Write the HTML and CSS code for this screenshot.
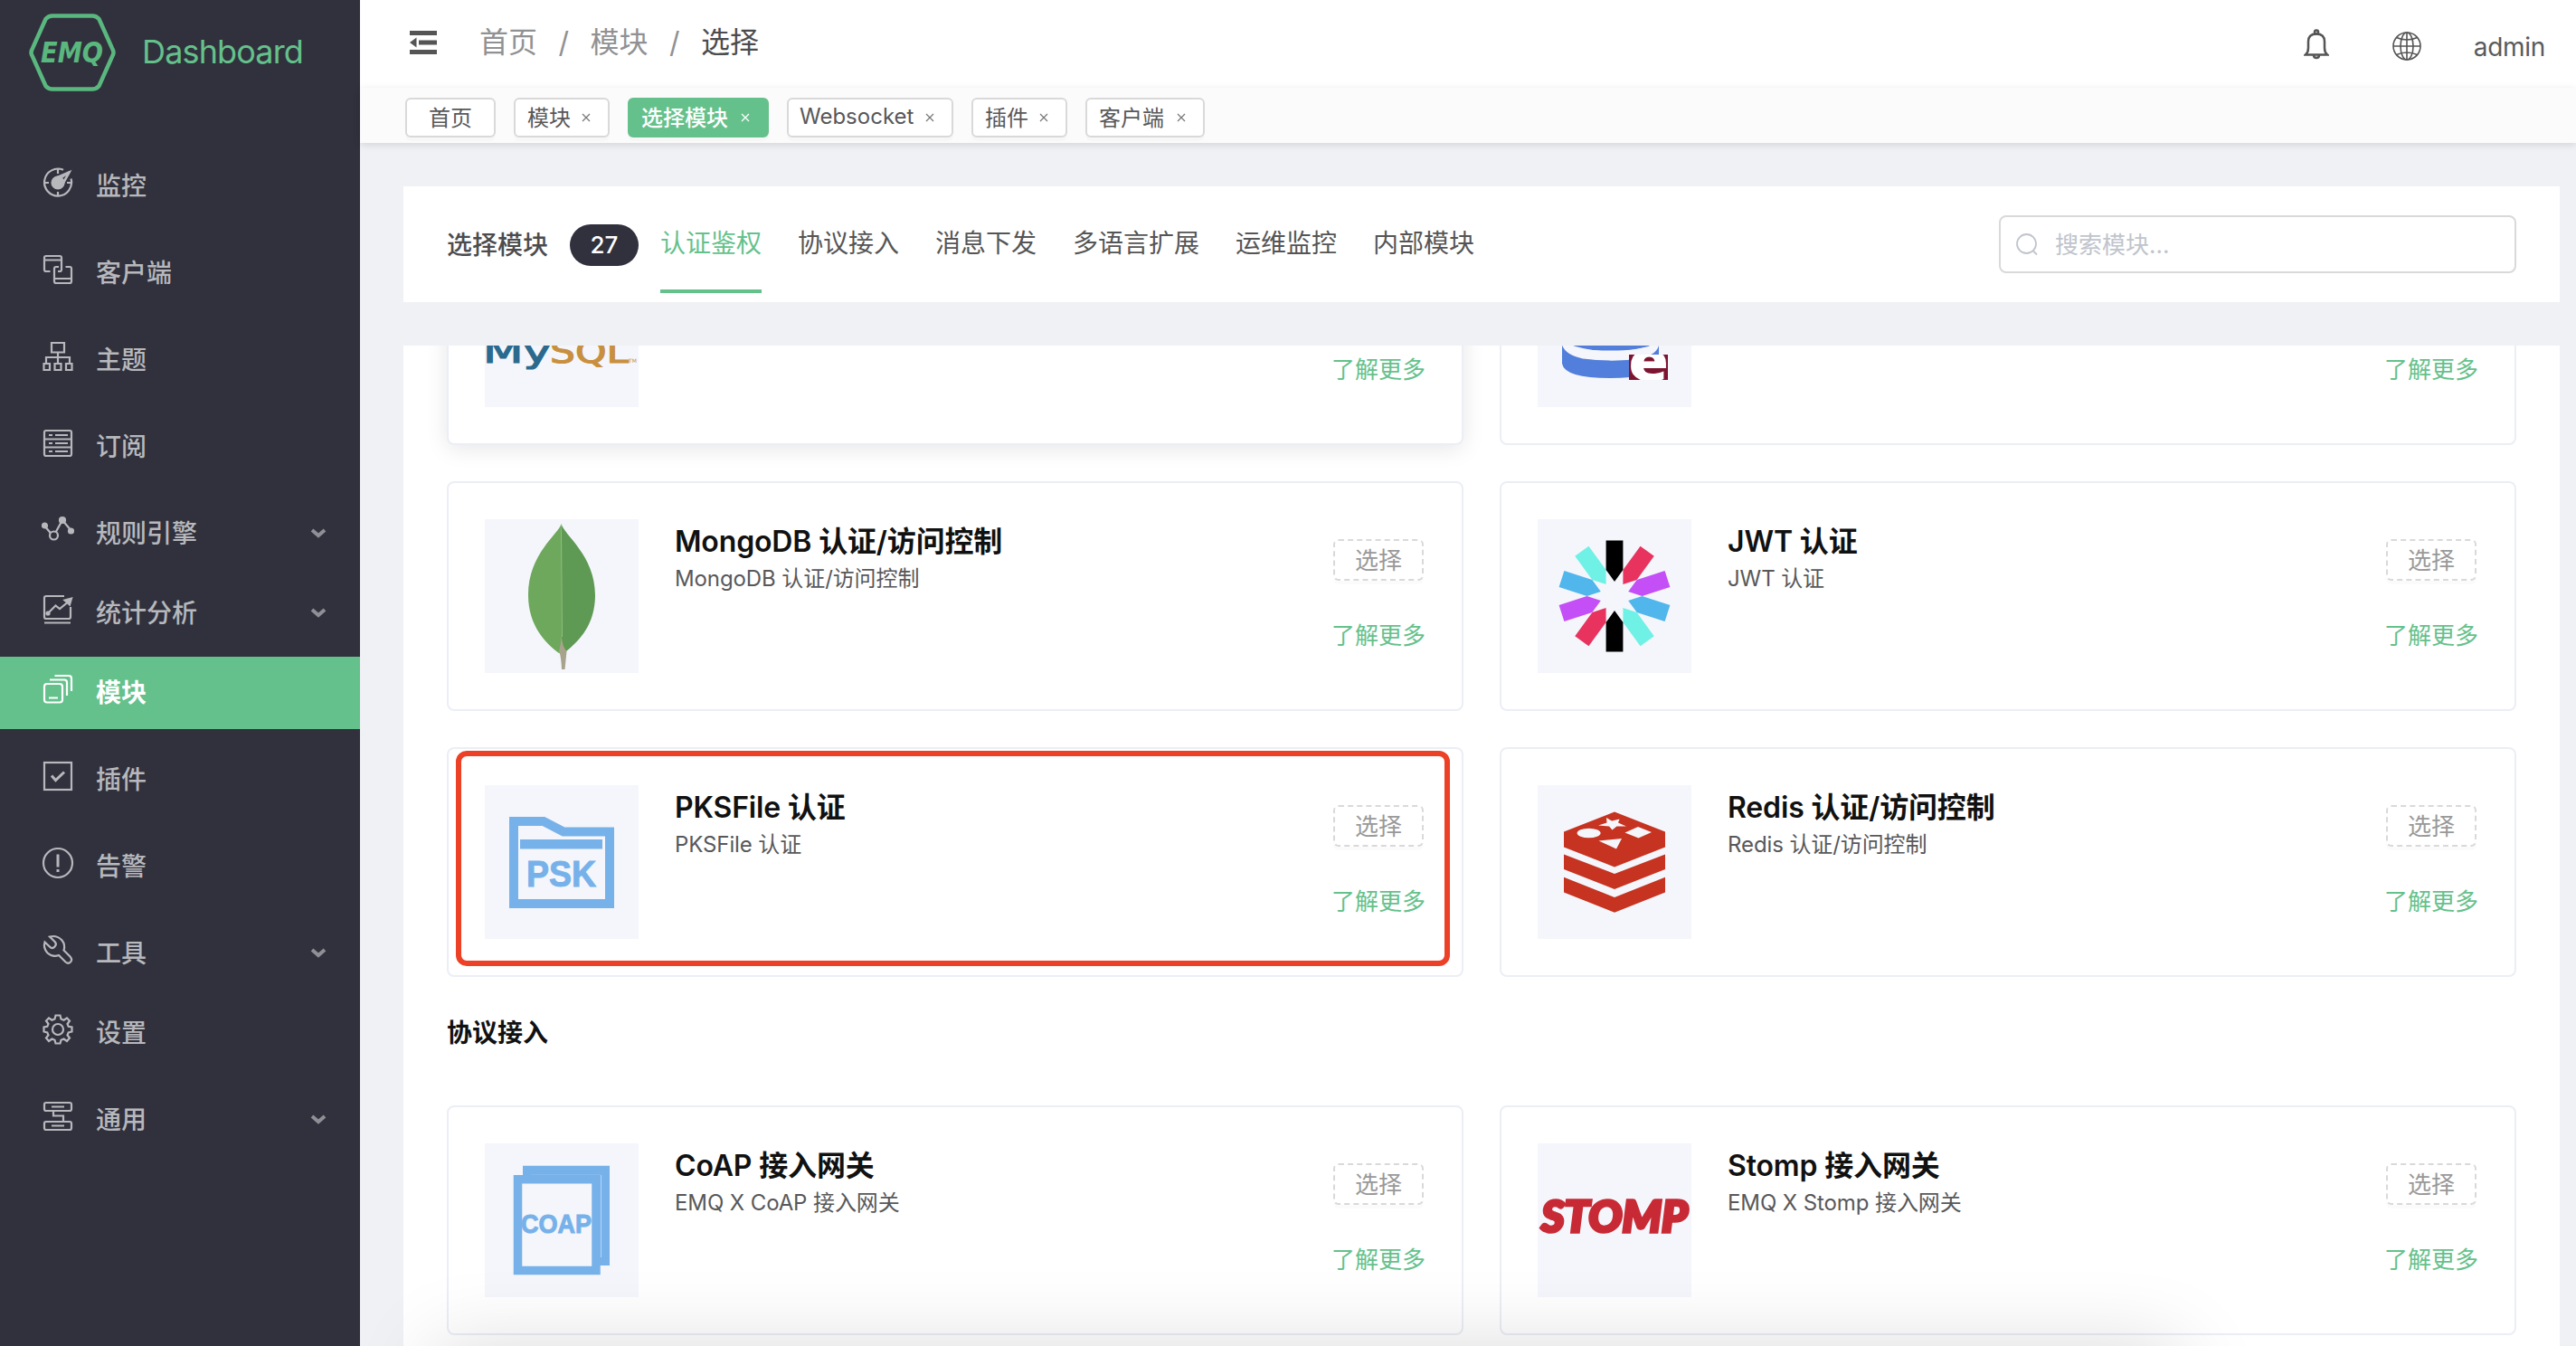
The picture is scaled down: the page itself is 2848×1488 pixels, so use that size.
FILE: index.html
```html
<!DOCTYPE html>
<html lang="zh-CN">
<head>
<meta charset="utf-8">
<title>EMQ Dashboard</title>
<link rel="stylesheet" href="styles.css">
</head>
<body>
<div class="app">
  <aside class="sidebar">
    <div class="brand">
      <svg class="brand-logo" width="96" height="86" viewBox="0 0 96 86">
        <path d="M26 2.500H70Q74.500 2.500 77.500 6L92 38.500Q95 43 92 47.500L77.500 80Q74.500 83.500 70 83.500H26Q21.500 83.500 18.500 80L4 47.500Q1 43 4 38.500L18.500 6Q21.500 2.500 26 2.500Z" class="logo-line"/>
        <text x="13" y="54" textLength="69" lengthAdjust="spacingAndGlyphs" class="logo-text">EMQ</text>
      </svg>
      <span class="brand-name">Dashboard</span>
    </div>
    <nav class="menu">
      <a class="menu-item"><svg class="menu-icon" viewBox="0 0 36 36"><path d="M24 3.800A15 15 0 1 0 32.500 13.500M18 3v5M18 28v5M3 18h5M28 18h5"/><path d="M31 6 21.500 12.500M31 6 24 17"/><circle cx="18" cy="18" r="6.500" class="fill"/><path d="M18 11.500 31 6 24.500 18Z"/></svg><span>监控</span></a>
      <a class="menu-item"><svg class="menu-icon" viewBox="0 0 36 36"><path d="M9.500 20H5Q3 20 3 18V5Q3 3 5 3H20Q22 3 22 5V18Q22 20 20 20H18M3 7.500H22"/><path d="M26.500 15H31Q33 15 33 17V31Q33 33 31 33H16Q14 33 14 31V17Q14 15 16 15H19M14 28H33"/></svg><span>客户端</span></a>
      <a class="menu-item"><svg class="menu-icon" viewBox="0 0 36 36"><path d="M11 3H25V13.500H11ZM18 13.500V26M5 26V19H31V26M2.500 26H9V33H2.500ZM14.500 26H21.500V33H14.500ZM27 26H33.500V33H27Z"/></svg><span>主题</span></a>
      <a class="menu-item"><svg class="menu-icon" viewBox="0 0 36 36"><rect x="3" y="4" width="30" height="28" rx="2"/><path d="M3 13.500H33M3 22.500H33M8 9H12M15 9H29M8 18H12M15 18H29M8 27H12M15 27H29"/></svg><span>订阅</span></a>
      <a class="menu-item sub"><svg class="menu-icon" viewBox="0 0 36 36"><path d="M3 13 13 25 23 7 33 19"/><circle cx="3.500" cy="13" r="2.500" class="fill"/><circle cx="23" cy="7" r="3" class="fill"/><circle cx="32.500" cy="19" r="2.500" class="fill"/><circle cx="13.500" cy="24" r="4.500" class="bg"/></svg><span>规则引擎</span><svg class="chevron" viewBox="0 0 18 12"><path d="M2 3 9 9 16 3"/></svg></a>
      <a class="menu-item sub"><svg class="menu-icon" viewBox="0 0 36 36"><path d="M25 3H5Q3 3 3 5V26Q3 28 5 28H30Q32 28 32 26V15M3 32.500H32M7 22 15.500 13.500 20 17 31 8"/><circle cx="7" cy="22" r="1.500" class="fill"/><path d="M25.500 7.500 33 5.500 31 12.500Z" class="fill"/></svg><span>统计分析</span><svg class="chevron" viewBox="0 0 18 12"><path d="M2 3 9 9 16 3"/></svg></a>
      <a class="menu-item active"><svg class="menu-icon" viewBox="0 0 36 36"><rect x="3" y="12" width="20" height="20.500" rx="3"/><path d="M8 27.500H18M9 7.500H25Q28 7.500 28 10.500V25M14.500 3H30Q33 3 33 6V20"/></svg><span>模块</span></a>
      <a class="menu-item"><svg class="menu-icon" viewBox="0 0 36 36"><rect x="3" y="3" width="30" height="30"/><path d="M11 17.500 15.500 22.500 25 13.500" class="thick"/></svg><span>插件</span></a>
      <a class="menu-item"><svg class="menu-icon" viewBox="0 0 36 36"><circle cx="18" cy="18" r="16"/><path d="M18 8.500V22.500M18 25V28" class="thick"/></svg><span>告警</span></a>
      <a class="menu-item sub"><svg class="menu-icon" viewBox="0 0 36 36"><path d="M9 3.500Q17 1.500 22.500 7.500Q26.500 12.500 24.500 18.500L31.500 25.500Q34.500 29 32 31.500Q29.500 34 26.500 31.500L19 24Q12 26.500 6.500 21.500Q1.500 16 3.500 9.500L10 15.500Q12.500 17 14.500 14.500Q17 12 15 9.500Z"/></svg><span>工具</span><svg class="chevron" viewBox="0 0 18 12"><path d="M2 3 9 9 16 3"/></svg></a>
      <a class="menu-item"><svg class="menu-icon" viewBox="0 0 36 36"><path d="M15.500 2.500H20.500L21.500 6.500L24.500 7.700L28 5.500L31 8.500L28.500 12L29.700 14.800L33.500 15.500V20.500L29.700 21.500L28.500 24.300L31 27.500L28 31L24.500 28.500L21.500 29.700L20.500 33.500H15.500L14.500 29.700L11.500 28.500L8 31L5 27.500L7.500 24.300L6.300 21.500L2.500 20.500V15.500L6.300 14.800L7.500 12L5 8.500L8 5.500L11.500 7.700L14.500 6.500Z"/><circle cx="18" cy="18" r="6"/></svg><span>设置</span></a>
      <a class="menu-item sub"><svg class="menu-icon" viewBox="0 0 36 36"><rect x="3" y="3" width="30" height="9" rx="2"/><rect x="3" y="24" width="30" height="9" rx="2"/><path d="M11 7.500H25M11 28.500H25M13 12V17.500H24V24"/></svg><span>通用</span><svg class="chevron" viewBox="0 0 18 12"><path d="M2 3 9 9 16 3"/></svg></a>
    </nav>
  </aside>

  <main class="main">
    <header class="topbar">
      <svg class="fold" width="30" height="26" viewBox="0 0 30 26"><path d="M0 0H30V5H0ZM10 10.500H30V15.500H10ZM0 21H30V26H0ZM0 13 7.500 7.500V18.500Z"/></svg>
      <div class="crumbs"><span>首页</span><i>/</i><span>模块</span><i>/</i><b>选择</b></div>
      <div class="tools">
        <svg class="bell" width="28" height="34" viewBox="0 0 28 34"><path d="M2 28.500H26Q23 26 23 21V14Q23 5.500 14 5.500T5 14V21Q5 26 2 28.500Z"/><circle cx="14" cy="3.500" r="2"/><path d="M11 29Q11 32 14 32T17 29"/></svg>
        <svg class="globe" width="34" height="34" viewBox="0 0 34 34"><circle cx="17" cy="17" r="15"/><ellipse cx="17" cy="17" rx="7" ry="15"/><path d="M2 17H32M17 2V32M5.500 7.500Q17 12.500 28.500 7.500M5.500 26.500Q17 21.500 28.500 26.500"/></svg>
        <span>admin</span>
      </div>
    </header>
    <div class="tags">
      <a class="tag home">首页</a>
      <a class="tag w2">模块<svg viewBox="0 0 10 10"><path d="M1 1 9 9M9 1 1 9"/></svg></a>
      <a class="tag w4 on">选择模块<svg viewBox="0 0 10 10"><path d="M1 1 9 9M9 1 1 9"/></svg></a>
      <a class="tag ws">Websocket<svg viewBox="0 0 10 10"><path d="M1 1 9 9M9 1 1 9"/></svg></a>
      <a class="tag w2">插件<svg viewBox="0 0 10 10"><path d="M1 1 9 9M9 1 1 9"/></svg></a>
      <a class="tag w3">客户端<svg viewBox="0 0 10 10"><path d="M1 1 9 9M9 1 1 9"/></svg></a>
    </div>

    <section class="filter">
      <span class="filter-title">选择模块</span>
      <span class="badge">27</span>
      <nav class="tabs"><a class="on">认证鉴权</a><a>协议接入</a><a>消息下发</a><a>多语言扩展</a><a>运维监控</a><a>内部模块</a></nav>
      <div class="search"><svg width="26" height="26" viewBox="0 0 26 26"><circle cx="12.500" cy="12.500" r="10.500"/><path d="M19.500 20 24 24.500"/></svg><span>搜索模块...</span></div>
    </section>

    <section class="list">
      <div class="grid first">
        <article class="card hover">
          <svg class="pic" viewBox="0 0 170 170"><g class="mysql"><text x="-2" y="121" textLength="75" lengthAdjust="spacingAndGlyphs" class="my">My</text><text x="72" y="121" textLength="87" lengthAdjust="spacingAndGlyphs" class="sql">SQL</text><text x="159" y="121" class="tm">TM</text></g></svg>
          <div class="info"><h3>MySQL 认证/访问控制</h3><p>MySQL 认证/访问控制</p></div>
          <div class="acts"><button>选择</button><a>了解更多</a></div>
        </article>
        <article class="card">
          <svg class="pic" viewBox="0 0 170 170"><g fill="#527fdc"><path d="M27 60V88Q27 98 42 103Q80 114 122 103Q134 98 134 90V60Z"/><path d="M27 101Q30 112 50 116.500Q85 121 115 116Q133 111 134 101V122Q130 138 80 138T27 122Z"/></g><path d="M27 98Q36 107.500 80 107.500T134 98V101Q126 118 80 118T27 101Z" fill="#f4f6fb"/><svg x="101" y="112" width="43" height="28" viewBox="0 0 43 28"><rect width="43" height="28" fill="#7c1530"/><text x="-1" y="29" textLength="45" lengthAdjust="spacingAndGlyphs" class="letter-e">e</text></svg></svg>
          <div class="info"><h3>PostgreSQL 认证/访问控制</h3><p>PostgreSQL 认证/访问控制</p></div>
          <div class="acts"><button>选择</button><a>了解更多</a></div>
        </article>
        <article class="card">
          <svg class="pic" viewBox="0 0 170 170"><path d="M84.500 5C82 16 48 38 48 84C48 118 68 138 82 148H86Z" fill="#6ea85c"/><path d="M84.500 5C88 18 122 40 122 84C122 116 105 134 90 146L85 148Z" fill="#5e9a53"/><path d="M84.500 12 85.500 130" stroke="#8fbd7f" stroke-width="1"/><path d="M84.500 128Q86 142 90.500 146L88.500 166H85Q84.500 152 82 146Q84 140 84.500 128Z" fill="#a8a38b"/></svg>
          <div class="info"><h3>MongoDB 认证/访问控制</h3><p>MongoDB 认证/访问控制</p></div>
          <div class="acts"><button>选择</button><a>了解更多</a></div>
        </article>
        <article class="card">
          <svg class="pic" viewBox="0 0 170 170"><defs><path id="blade" d="M75.600 23.500H94.400V56L85 69L75.600 56Z"/></defs><use href="#blade" fill="#70f1e5" transform="rotate(144 85 85)"/><use href="#blade" fill="#70f1e5" transform="rotate(324 85 85)"/><use href="#blade" fill="#e8335f" transform="rotate(36 85 85)"/><use href="#blade" fill="#e8335f" transform="rotate(216 85 85)"/><use href="#blade" fill="#50b6eb" transform="rotate(108 85 85)"/><use href="#blade" fill="#50b6eb" transform="rotate(288 85 85)"/><use href="#blade" fill="#c44ff7" transform="rotate(72 85 85)"/><use href="#blade" fill="#c44ff7" transform="rotate(252 85 85)"/><use href="#blade"/><use href="#blade" transform="rotate(180 85 85)"/></svg>
          <div class="info"><h3>JWT 认证</h3><p>JWT 认证</p></div>
          <div class="acts"><button>选择</button><a>了解更多</a></div>
        </article>
        <article class="card marked">
          <svg class="pic" viewBox="0 0 170 170"><path d="M32 40H65L87 51.500H138V131H32Z" fill="none" stroke="#77b1ea" stroke-width="10"/><path d="M39 60H130V70.500H39Z" fill="#77b1ea"/><text x="46" y="112" textLength="77" lengthAdjust="spacingAndGlyphs" class="psk">PSK</text></svg>
          <div class="info"><h3>PKSFile 认证</h3><p>PKSFile 认证</p></div>
          <div class="acts"><button>选择</button><a>了解更多</a></div>
        </article>
        <article class="card">
          <svg class="pic" viewBox="0 0 170 170"><path d="M85 29.500 141 51.500V68.500L85 90.500 29 68.500V51.500ZM29 76.500 85 98 141 76.500V93L85 115 29 93ZM29 101.700 85 124 141 101.700V118.500L85 140.700 29 118.500Z" fill="#c63320"/><g fill="#f4f6fb"><ellipse cx="56.600" cy="53" rx="13" ry="5.300"/><path d="M96.500 52.500 111 46 126 52 111.500 58.500ZM67.500 61.500 93 59 87 70.500ZM76 36 82 39.500 90.500 37.500 89 41.500 98 45.500 87.500 45.500 82.500 49.500 79 45.500 67 44.500 76.500 41.500Z"/></g></svg>
          <div class="info"><h3>Redis 认证/访问控制</h3><p>Redis 认证/访问控制</p></div>
          <div class="acts"><button>选择</button><a>了解更多</a></div>
        </article>
      </div>
      <h2>协议接入</h2>
      <div class="grid">
        <article class="card">
          <svg class="pic" viewBox="0 0 170 170"><path d="M42 35V24.700H138V135H127V35Z" fill="#77b1ea"/><path d="M51 35.300H128.500V126" fill="none" stroke="#b9d5f3" stroke-width="1"/><path d="M36.500 39.700H123V140.500H36.500Z" fill="none" stroke="#77b1ea" stroke-width="9.500"/><text x="40" y="99" textLength="78" lengthAdjust="spacingAndGlyphs" class="coap">COAP</text></svg>
          <div class="info"><h3>CoAP 接入网关</h3><p>EMQ X CoAP 接入网关</p></div>
          <div class="acts"><button>选择</button><a>了解更多</a></div>
        </article>
        <article class="card">
          <svg class="pic" viewBox="0 0 170 170"><text x="4" y="98" textLength="162" lengthAdjust="spacingAndGlyphs" class="stomp">STOMP</text></svg>
          <div class="info"><h3>Stomp 接入网关</h3><p>EMQ X Stomp 接入网关</p></div>
          <div class="acts"><button>选择</button><a>了解更多</a></div>
        </article>
      </div>
    </section>
  </main>
</div>
</body>
</html>
```
FILE: styles.css
```css
*, *::before, *::after { box-sizing: border-box; }
body {
  margin: 0;
  font-family: Inter, "Noto Sans CJK SC", sans-serif;
  color: #555;
  background: #f0f1f5;
}
.app { display: flex; height: 1488px; overflow: hidden; position: relative; }
/* soft shade rising from the bottom edge of the window */
.app::after {
  content: "";
  position: absolute;
  left: 480px;
  top: 1490px;
  width: 1930px;
  height: 200px;
  box-shadow: 0 0 90px rgba(0, 0, 0, .15);
}

/* sidebar */
.sidebar { width: 398px; flex: none; background: #30313d; }
.brand { display: flex; align-items: center; height: 166px; padding: 0 0 50px 32px; }
.brand-logo { flex: none; }
.logo-line { fill: none; stroke: #5ab87f; stroke-width: 4.500; }
.logo-text { font: italic 700 32px "DejaVu Sans", sans-serif; fill: #5ab87f; }
.brand-name { margin-left: 29px; padding-bottom: 2px; font-size: 36px; line-height: 50px; letter-spacing: -.85px; color: #65c18c; }
.menu { display: flex; flex-direction: column; }
.menu-item {
  display: flex;
  align-items: center;
  height: 80px;
  margin-bottom: 16px;
  padding: 0 37px 0 46px;
  font-size: 28px;
  font-weight: 500;
  color: #b7b8bc;
}
.menu-item span { padding-bottom: 4px; }
.menu-item.sub { margin-bottom: 8px; }
.menu-item.active { background: #65c18c; color: #fff; font-weight: 600; }
.menu-icon {
  width: 36px;
  height: 36px;
  margin: 0 24px 8px 0;
  fill: none;
  stroke: currentColor;
  stroke-width: 2.200;
}
.menu-icon .fill { fill: currentColor; }
.menu-icon .bg { fill: #30313d; }
.menu-icon .thick { stroke-width: 3; }
.chevron { width: 18px; height: 12px; margin: 0 0 2px auto; fill: none; stroke: #8f9096; stroke-width: 4; }

/* header */
.main { flex: 1; min-width: 0; display: flex; flex-direction: column; }
.topbar { display: flex; align-items: center; flex: none; height: 97px; padding: 0 34px 4px 55px; background: #fff; }
.fold { fill: #555; }
.crumbs { display: flex; margin: 0 0 0 47px; font-size: 32px; line-height: 48px; color: #909193; }
.crumbs i { width: 58.500px; text-align: center; font-style: normal; }
.crumbs b { font-weight: 400; color: #4c4c4e; }
.tools { display: flex; align-items: center; margin-left: auto; padding-top: 8px; font-size: 28px; letter-spacing: -.3px; color: #5a5a5c; }
.tools span { padding-top: 2px; }
.tools svg { fill: none; stroke: #555; }
.bell { stroke-width: 2.500; margin: -4px 69px 0 0; }
.globe { stroke-width: 1.600; margin: 0 57px 0 0; }

.tags {
  display: flex;
  flex: none;
  gap: 20px;
  height: 61px;
  padding: 11px 50px;
  background: #fbfbfb;
  box-shadow: 0 2px 8px rgba(0, 0, 0, .12);
}
.tag {
  display: flex;
  align-items: center;
  justify-content: space-between;
  height: 44px;
  padding: 0 19px 3px 13px;
  border: 2px solid #d9d9d9;
  border-radius: 6px;
  background: #fff;
  box-shadow: 0 4px 0 rgba(0, 0, 0, .015);
  font-size: 24px;
  color: #58585a;
}
.tag svg { width: 10px; height: 10px; margin-top: 3px; stroke: #777; stroke-width: 1.200; }
.tag.home { width: 100px; padding: 0 0 3px; justify-content: center; }
.tag.w2 { width: 106px; }
.tag.w3 { width: 132px; }
.tag.w4 { width: 156px; }
.tag.ws { width: 184px; padding-left: 12px; }
.tag.on { border-color: #65c18c; background: #65c18c; color: #fff; font-weight: 500; }
.tag.on svg { stroke: #fff; }

/* filter bar */
.filter {
  display: flex;
  align-items: center;
  flex: none;
  height: 128px;
  margin: 48px 18px 48px 48px;
  padding: 0 48px;
  background: #fff;
  font-size: 28px;
}
.filter-title { padding-bottom: 3px; font-weight: 500; color: #4c4c4e; }
.badge {
  width: 76px;
  height: 46px;
  margin: 2px 24px 0;
  border-radius: 23px;
  background: #30313d;
  color: #fff;
  font-size: 26px;
  font-weight: 500;
  line-height: 46px;
  text-align: center;
}
.tabs { display: flex; gap: 40px; align-self: flex-end; margin-bottom: 10px; }
.tabs a { height: 108px; line-height: 107px; color: #555; }
.tabs a.on { color: #65c18c; border-bottom: 4px solid #65c18c; }
.search {
  display: flex;
  align-items: center;
  width: 572px;
  height: 64px;
  margin-left: auto;
  padding-left: 16px;
  border: 2px solid #d9d9d9;
  border-radius: 8px;
  font-size: 26px;
  color: #c0c4cc;
}
.search svg { margin-right: 18px; fill: none; stroke: #c0c4cc; stroke-width: 1.800; }
.search span { padding-bottom: 3px; }

/* module list */
.list { flex: 1; min-height: 0; margin: 0 18px 0 48px; padding: 0 48px; overflow: hidden; background: #fff; }
.grid { display: grid; grid-template-columns: 1fr 1fr; gap: 40px; }
.grid.first { margin-top: -144px; }
.list h2 { margin: 38px 0 56px; height: 48px; font-size: 28px; line-height: 48px; font-weight: 600; color: #111; }
.card {
  display: flex;
  position: relative;
  height: 254px;
  padding: 40px;
  border: 2px solid #ebeef5;
  border-radius: 8px;
  background: #fff;
}
.card.hover { box-shadow: 0 4px 24px rgba(0, 0, 0, .1); }
/* annotation frame around the highlighted module */
.card.marked::after {
  content: "";
  position: absolute;
  left: 8px;
  top: 2px;
  width: 1099px;
  height: 238px;
  border: 6px solid #ec4027;
  border-radius: 12px;
}
.pic { width: 170px; height: 170px; flex: none; background: #f4f6fb; }
.info { flex: 1; padding: 0 0 0 40px; white-space: nowrap; }
.info h3 { margin: 0; padding-top: 2px; font-size: 32px; line-height: 46px; letter-spacing: -.15px; font-weight: 600; color: #111; }
.info p { margin: 0; font-size: 24px; line-height: 36px; letter-spacing: -.1px; color: #58585a; }
.acts { width: 104px; font-size: 26px; }
.acts button {
  display: block;
  width: 100px;
  height: 46px;
  margin: 22px 0 37px 2px;
  padding: 0 0 4px;
  border: 2px dashed #d9d9d9;
  border-radius: 6px;
  background: #fff;
  box-shadow: 0 4px 0 rgba(0, 0, 0, .015);
  font: inherit;
  color: #999;
}
.acts a { display: block; line-height: 48px; white-space: nowrap; color: #65c18c; }

/* lettering inside the module pictures */
.mysql text { font-family: "DejaVu Sans", sans-serif; font-size: 35px; stroke-width: 1.200; }
.mysql .my { fill: #2b6a8e; stroke: #2b6a8e; }
.mysql .sql { fill: #c88f3e; stroke: #c88f3e; }
.mysql .tm { font-size: 6px; fill: #c88f3e; stroke: none; }
.letter-e { font: 800 62px "Open Sans", sans-serif; fill: #fff; }
.psk { font: 700 40px "Liberation Sans", sans-serif; fill: #77b1ea; stroke: #77b1ea; stroke-width: 1; }
.coap { font: 700 29px "Liberation Sans", sans-serif; fill: #77b1ea; stroke: #77b1ea; stroke-width: 1; }
.stomp { font: italic 900 47px Lato, sans-serif; fill: #c82a35; stroke: #c82a35; stroke-width: 3.500; }
```
